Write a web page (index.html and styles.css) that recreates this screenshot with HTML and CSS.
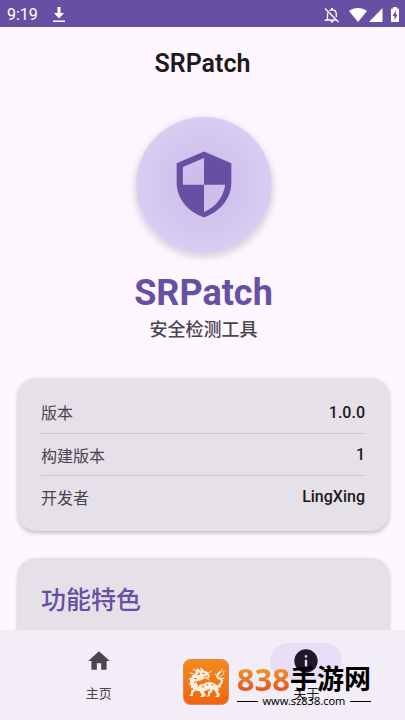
FILE: index.html
```html
<!DOCTYPE html>
<html lang="zh-CN">
<head>
    <meta charset="UTF-8">
    <meta name="viewport" content="width=device-width, initial-scale=1.0">
    <title>SRPatch</title>
    <link rel="stylesheet" href="styles.css">
</head>
<body>
    <div class="status-bar">
        <span class="clock">9:19</span>
        <svg class="download" width="14" height="16" viewBox="0 0 14 16" fill="#fff"><path d="M5.500 0h3v6H12l-5 5.500L2 6h3.500zM1 13.500h12V15H1z"/></svg>
        <div class="status-icons">
            <svg width="16" height="16" viewBox="0 0 16 16" fill="none" stroke="#fff" stroke-width="1.300"><path d="M1 1.500l13.500 13.500M3.900 5.500C3.500 6.300 3.500 7 3.500 8v4L2 13h10M5.500 3.600C6.300 3 7 2.800 8 2.800c2.800 0 4.300 1.900 4.300 4.600V10"/><path d="M8 1v2M6.800 14.600h2.400" stroke-width="2"/></svg>
            <svg width="18" height="14" viewBox="0 0 18 14" fill="#fff"><path d="M9 14L0 3C5-1 13-1 18 3z"/></svg>
            <svg width="14" height="14" viewBox="0 0 14 14" fill="#fff"><path d="M13.500 0v14H0z"/></svg>
            <svg class="battery" width="10" height="15" viewBox="0 0 10 15"><path fill="#fff" d="M3 0h4v1.500h1.200q.8 0 .8.800v11.900q0 .8-.8.800H1.800Q1 15 1 14.200V2.300q0-.8.800-.8H3z"/><path fill="#6750a4" d="M5.800 3.500L2.500 9h2v4l3.200-5.500h-1.900z"/></svg>
        </div>
    </div>

    <header class="top-bar">SRPatch</header>

    <main class="content">
        <div class="logo">
            <svg width="82" height="82" viewBox="0 0 24 24" fill="#6750a4"><path d="M12 2.200L4 5.600v5.700c0 4.700 3.400 8.700 8 10.200 4.600-1.500 8-5.500 8-10.200V5.600zm0 1.900v7.800h6.200c-.5 3.700-2.900 6.600-6.200 8v-8H5.800V6.700z"/></svg>
        </div>
        <h1 class="app-name">SRPatch</h1>
        <p class="subtitle">安全检测工具</p>

        <dl class="card">
            <div class="row"><dt>版本</dt><dd>1.0.0</dd></div>
            <div class="row"><dt>构建版本</dt><dd>1</dd></div>
            <div class="row"><dt>开发者</dt><dd>LingXing</dd></div>
        </dl>

        <section class="card features">
            <h2>功能特色</h2>
        </section>
    </main>

    <nav class="bottom-nav">
        <a class="nav-item" href="#home">
            <span class="pill"><svg width="26" height="28" viewBox="0 0 24 24" fill="#49454f"><path d="M10 20v-6h4v6h5v-8h3L12 3 2 12h3v8z"/></svg></span>
            <span>主页</span>
        </a>
        <a class="nav-item active" href="#about">
            <span class="pill"><svg width="28" height="28" viewBox="0 0 24 24" fill="#1d192b"><path d="M12 2a10 10 0 1 0 0 20 10 10 0 0 0 0-20zm1 15h-2v-6h2zm0-8h-2V7h2z"/></svg></span>
            <span>关于</span>
        </a>
    </nav>

    <div class="watermark">
        <svg class="dragon" width="46" height="46" viewBox="0 0 46 46">
            <defs><linearGradient id="orange" x1="0" y1="0" x2="0" y2="1"><stop offset="0" stop-color="#f58a1c"/><stop offset="1" stop-color="#f0640f"/></linearGradient></defs>
            <rect x="0.500" y="0.500" width="45" height="45" rx="7" fill="url(#orange)" stroke="#d98a55"/>
            <!-- head and neck, body, legs -->
            <g fill="#fff0e4">
                <path d="M14 9l4 3-1-4 5 4 3 1 2 4-1 2-4 0-3 2-4 1c-2 1-2 3 0 4l5-1c4-2 8-3 12 0l3 2 3-1 0 2-4 1-2 2-5-1c-4 2-8 3-12 2-5-1-8-4-8-9 0-4 2-7 5-8z"/>
                <path d="M11 27l3 2-2 3-2 2 0 3-4 0 2-2 0-3 3-2zM18 30l3 0 0 3 2 3-2 2-4 0 2-2-2-3zM27 29l3 0-1 4-2 1 0 3-4 1 2-2 0-3 2-2zM32 27l4 3-1 3 2 2-1 3-4 0 2-2-1-2-2-4z"/>
            </g>
            <g fill="none" stroke="#fff0e4" stroke-linecap="round" stroke-linejoin="round">
                <path stroke-width="2" d="M36 26c5-3 3-6-1-7-2-2 0-4 2-6"/>
                <path stroke-width="1" d="M38 13l1-3M34 17l-2-2M37 18c2-1 4-3 4-6M38 20l3-1M13 12l-3-2M11 15l-4-1M9 19l-3 1M9 23l-3 2M11 27l-3 2M23 19l3 2M26 14l2-2"/>
            </g>
            <path fill="none" stroke="#ee7014" stroke-width="1" d="M19 14l3 1M21 18l4-1M15 13l2 2-3 1M11 19l3 1M11 24l3-2M15 28l1-3M20 29l0-3M25 27l-1-2M29 27l1-2"/>
        </svg>
        <div class="mark-text">
            <div class="mark-name"><span class="digits">838</span><span>手游网</span></div>
            <div class="mark-url">www.sz838.com</div>
        </div>
    </div>
</body>
</html>
```
FILE: styles.css
```css
* {
    box-sizing: border-box;
}

body {
    margin: 0;
    height: 100vh;
    display: flex;
    flex-direction: column;
    overflow: hidden;
    position: relative;
    background-color: #fef7ff;
    color: #1d1b20;
    font-family: Roboto, "Noto Sans CJK SC", sans-serif;
}

h1, h2, p, dl, dd {
    margin: 0;
}

.status-bar {
    flex: none;
    height: 27px;
    padding: 2px 5px 0 7px;
    display: flex;
    align-items: center;
    background-color: #6750a4;
    color: white;
}

.clock {
    font-size: 16px;
}

.download {
    margin-left: 14px;
}

.status-icons {
    margin-left: auto;
    display: flex;
    align-items: center;
    gap: 2px;
}

.status-icons svg:first-child {
    margin-right: 7px;
}

.status-icons .battery {
    margin-left: 5px;
}

.top-bar {
    flex: none;
    height: 73px;
    line-height: 73px;
    text-align: center;
    font-size: 25px;
    font-weight: 600;
}

.content {
    flex: 1;
    min-height: 0;
    overflow: hidden;
    padding: 17px 16px 0 18px;
    display: flex;
    flex-direction: column;
    align-items: center;
}

.logo {
    flex: none;
    width: 136px;
    height: 136px;
    border-radius: 50%;
    display: flex;
    justify-content: center;
    align-items: center;
    background: radial-gradient(circle, #c9bae7 0%, #d9cdf3 70%);
    box-shadow: 0 3px 10px rgba(0, 0, 0, 0.2);
}

.app-name {
    margin-top: 18px;
    line-height: 44px;
    font-size: 36px;
    font-weight: 700;
    color: #6750a4;
}

.subtitle {
    line-height: 30px;
    font-size: 18px;
    font-weight: 500;
    color: #49454f;
}

.card {
    flex: none;
    width: 100%;
    margin-top: 33px;
    padding: 13px 24px 14px 23px;
    border-radius: 18px;
    background-color: #e6e0e9;
    box-shadow: 0 2px 4px rgba(0, 0, 0, 0.25);
}

.row {
    display: flex;
    justify-content: space-between;
    align-items: center;
    height: 42px;
    font-size: 16px;
}

.row + .row {
    border-top: 1px solid #cac4d0;
}

.row dt {
    color: #49454f;
}

.row dd {
    font-weight: 500;
}

.features {
    margin-top: 27px;
    padding-top: 25px;
    height: 160px;
}

.features h2 {
    line-height: 36px;
    font-size: 25px;
    font-weight: 500;
    color: #6750a4;
}

.bottom-nav {
    flex: none;
    position: relative;
    height: 90px;
    padding-top: 13px;
    display: flex;
    gap: 10px;
    background-color: #f3edf7;
}

.nav-item {
    flex: 1;
    display: flex;
    flex-direction: column;
    align-items: center;
    gap: 5px;
    font-size: 13px;
    line-height: 20px;
    color: #49454f;
    text-decoration: none;
}

.pill {
    width: 72px;
    height: 36px;
    border-radius: 18px;
    display: flex;
    justify-content: center;
    align-items: center;
}

.active {
    color: #1d1b20;
}

.active .pill {
    background-color: #e8def8;
}

/* site mark floating over the navigation */
.watermark {
    position: absolute;
    right: 34px;
    bottom: 11px;
    display: flex;
    align-items: flex-end;
    gap: 8px;
    color: black;
    pointer-events: none;
}

.dragon {
    margin-bottom: 4px;
}

.mark-name {
    display: flex;
    align-items: center;
    height: 28px;
    font-family: "Noto Sans", "Noto Sans CJK SC", sans-serif;
    font-size: 27px;
    font-weight: 700;
    line-height: 28px;
}

.digits {
    font-size: 31px;
    background: linear-gradient(#f0a030 0%, #e4581c 90%);
    -webkit-background-clip: text;
    background-clip: text;
    color: transparent;
}

.mark-url {
    display: flex;
    align-items: center;
    justify-content: space-between;
    font-family: "Noto Sans", sans-serif;
    font-size: 11px;
    line-height: 16px;
}

.mark-url::before,
.mark-url::after {
    content: "";
    width: 21px;
    height: 1px;
    background-color: black;
}
```
